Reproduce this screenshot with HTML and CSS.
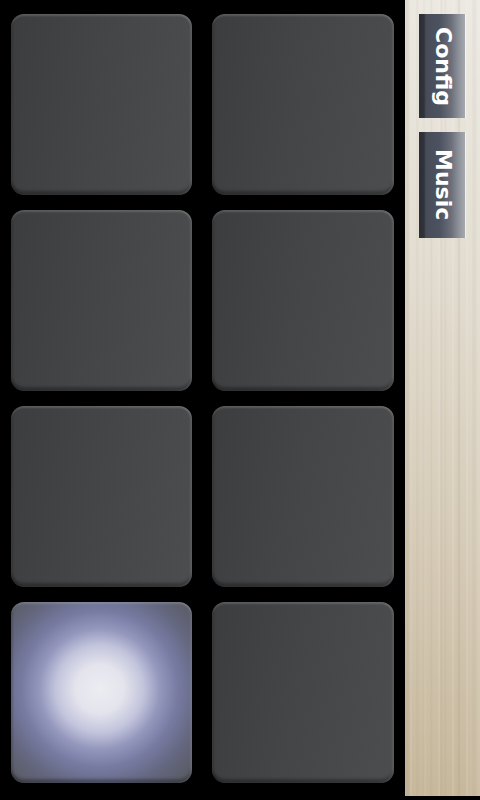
FILE: index.html
```html
<!DOCTYPE html>
<html>
<head>
<meta charset="utf-8">
<link rel="stylesheet" href="styles.css">
</head>
<body>
<div class="app">
  <div class="pads">
    <div class="pad"></div>
    <div class="pad"></div>
    <div class="pad"></div>
    <div class="pad"></div>
    <div class="pad"></div>
    <div class="pad"></div>
    <div class="pad lit"></div>
    <div class="pad"></div>
  </div>
  <div class="sidebar">
    <div class="tab tab-config"><span class="label">Config</span></div>
    <div class="tab tab-music"><span class="label">Music</span></div>
  </div>
</div>
</body>
</html>
```
FILE: styles.css
```css
html, body {
  margin: 0;
  padding: 0;
  background: #000;
  width: 480px;
  height: 800px;
  overflow: hidden;
}
.app {
  display: flex;
  width: 480px;
  height: 800px;
}
.pads {
  display: grid;
  grid-template-columns: 181px 182px;
  grid-auto-rows: 181px;
  column-gap: 20px;
  row-gap: 15px;
  padding: 14px 0 0 11px;
}
.pad {
  border-radius: 13px;
  background: linear-gradient(100deg, #3c3d3f 0%, #444547 45%, #4c4d4f 100%);
  box-shadow:
    inset 0 2px 2px rgba(255,255,255,0.15),
    inset -2px 0 2px rgba(255,255,255,0.10),
    inset 2px 0 2px rgba(0,0,0,0.12),
    inset 0 -4px 3px rgba(0,0,0,0.3);
}
.pad.lit {
  background: radial-gradient(circle at 49% 48%, #ececf2 0px, #e4e4ed 24px, #c2c4dc 44px, #9598bd 60px, #777ba2 78px, #64677f 100px, #57595f 128px);
}
.sidebar {
  margin-left: 11px;
  width: 75px;
  height: 796px;
  background:
    repeating-linear-gradient(90deg, rgba(255,255,255,0) 0px, rgba(255,255,255,0) 5px, rgba(255,255,255,0.2) 6px, rgba(255,255,255,0) 7px, rgba(0,0,0,0) 11px, rgba(120,100,70,0.07) 12px, rgba(0,0,0,0) 14px),
    repeating-linear-gradient(90deg, rgba(0,0,0,0) 0px, rgba(110,90,60,0.06) 3px, rgba(0,0,0,0) 4px, rgba(0,0,0,0) 17px),
    linear-gradient(90deg, rgba(150,130,100,0.12) 0, rgba(0,0,0,0) 8px, rgba(0,0,0,0) 60px, rgba(255,255,255,0.12) 75px),
    linear-gradient(180deg, #ece9e2 0%, #e2dcd0 35%, #d5cab6 70%, #c7b89c 100%);
  display: flex;
  flex-direction: column;
  gap: 14px;
  padding-top: 14px;
  box-sizing: border-box;
}
.tab {
  margin-left: 14px;
  width: 46px;
  background: linear-gradient(90deg, #2b2e35 0px, #30333b 5px, #474c58 7px, #4d5260 45%, #6a6f7a 70%, #9498a0 90%, #a6a9ad 100%);
  display: flex;
  align-items: center;
  justify-content: center;
  box-shadow: 1px 0 0 rgba(255,255,255,0.5);
}
.tab-config { height: 104px; }
.tab-music { height: 106px; }
.label {
  writing-mode: vertical-rl;
  color: #fff;
  font-family: "DejaVu Sans", sans-serif;
  font-weight: bold;
  font-size: 22px;
  line-height: 1;
  margin-left: 1px;
}
```
